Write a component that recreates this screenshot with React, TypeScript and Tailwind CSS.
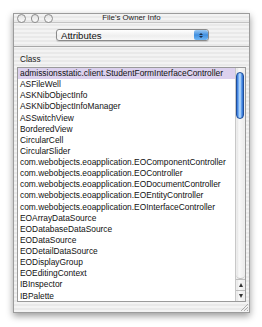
const rows = [
  "admissionsstatic.client.StudentFormInterfaceController",
  "ASFileWell",
  "ASKNibObjectInfo",
  "ASKNibObjectInfoManager",
  "ASSwitchView",
  "BorderedView",
  "CircularCell",
  "CircularSlider",
  "com.webobjects.eoapplication.EOComponentController",
  "com.webobjects.eoapplication.EOController",
  "com.webobjects.eoapplication.EODocumentController",
  "com.webobjects.eoapplication.EOEntityController",
  "com.webobjects.eoapplication.EOInterfaceController",
  "EOArrayDataSource",
  "EODatabaseDataSource",
  "EODataSource",
  "EODetailDataSource",
  "EODisplayGroup",
  "EOEditingContext",
  "IBInspector",
  "IBPalette",
];

const stripes =
  "bg-[repeating-linear-gradient(180deg,#f3f3f3_0px,#f3f3f3_2px,#e9e9e9_2px,#e9e9e9_4px)]";

function Light() {
  return (
    <span className="block h-[8.5px] w-[8.5px] rounded-full border border-[#8d8d8d] bg-[linear-gradient(180deg,#e2e2e2,#fbfbfb)]" />
  );
}

export default function App() {
  return (
    <div className="h-[327px] w-[262px] bg-white pl-[13px] pt-[13px] font-['Liberation_Sans',sans-serif] text-[#111]">
      <div
        className={`flex h-[300px] w-[237px] flex-col border border-[#9c9c9c] shadow-[0_3px_7px_rgba(0,0,0,0.4)] ${stripes}`}
      >
        {/* title bar */}
        <div className="relative flex h-[9px] items-center border-b border-[#c4c4c4]">
          <div className="flex gap-[5px] pl-[3px] pt-[1px]">
            <Light />
            <Light />
            <Light />
          </div>
          <span className="absolute left-0 right-0 top-[-1px] text-center text-[7.8px] leading-[10px] text-[#1a1a1a]">
            File's Owner Info
          </span>
        </div>

        {/* toolbar with popup */}
        <div className="flex h-[24px] items-center justify-center border-b border-[#a8a8a8] pl-[2px] pt-[1px]">
          <div className="flex h-[12px] w-[153px] items-stretch overflow-hidden rounded-[3px] border border-[#8a8a8a] bg-[linear-gradient(180deg,#ffffff,#eeeeee_60%,#f8f8f8)] shadow-[0_1px_1px_rgba(0,0,0,0.15)]">
            <span className="flex-1 pl-[4px] text-[9.6px] leading-[11px]">Attributes</span>
            <span className="flex w-[14px] flex-col items-center justify-center gap-[1px] rounded-[2px] bg-[linear-gradient(180deg,#9cc8f2,#3f8fe0_50%,#71b6f4)]">
              <span className="h-0 w-0 border-x-[2px] border-b-[2px] border-x-transparent border-b-[#1c2f4a]" />
              <span className="h-0 w-0 border-x-[2px] border-t-[2px] border-x-transparent border-t-[#1c2f4a]" />
            </span>
          </div>
        </div>

        {/* class label */}
        <div className="h-[20px] pl-[6px] pt-[8px] text-[8.2px] leading-[10px] text-[#222]">Class</div>

        {/* table */}
        <div className="mx-[3px] flex h-[235px] border border-[#9a9a9a] bg-white">
          <div className="flex-1 overflow-hidden">
            {rows.map((r, i) => (
              <div
                key={r}
                className={`h-[11.14px] whitespace-nowrap pl-[2px] text-[8.4px] leading-[11.14px] ${
                  i === 0 ? "bg-[#dcd1ee]" : "bg-white"
                }`}
              >
                {r}
              </div>
            ))}
          </div>

          {/* scroll bar */}
          <div className="flex w-[10px] flex-col border-l border-[#c8c8c8] bg-[repeating-linear-gradient(90deg,#f6f6f6_0px,#e4e4e4_1px,#f9f9f9_3px,#ececec_8px,#f6f6f6_10px)]">
            <div className="relative flex-1">
              <div className="absolute left-[0px] top-[4px] h-[47px] w-[8px] rounded-full border border-[#1f4f9a] bg-[linear-gradient(90deg,#2d6ed8,#8fc4f8_35%,#cfe6ff_50%,#6aa8ef_70%,#2a68cf)]" />
              <div className="absolute bottom-[0px] left-0 h-[10px] w-[9px] rounded-b-full border-b border-[#bdbdbd]" />
            </div>
            <div className="flex h-[11px] items-center justify-center border-t border-[#bdbdbd]">
              <span className="h-0 w-0 border-x-[2.5px] border-b-[4px] border-x-transparent border-b-[#333]" />
            </div>
            <div className="flex h-[11px] items-center justify-center border-t border-[#bdbdbd]">
              <span className="h-0 w-0 border-x-[2.5px] border-t-[4px] border-x-transparent border-t-[#333]" />
            </div>
          </div>
        </div>

        {/* bottom with resize grip */}
        <div className="flex flex-1 items-end justify-end pb-[1px] pr-[1px]">
          <svg width="8" height="8" viewBox="0 0 8 8">
            <path d="M8 1 L1 8 M8 4 L4 8 M8 7 L7 8" stroke="#9a9a9a" strokeWidth="0.8" />
          </svg>
        </div>
      </div>
    </div>
  );
}
